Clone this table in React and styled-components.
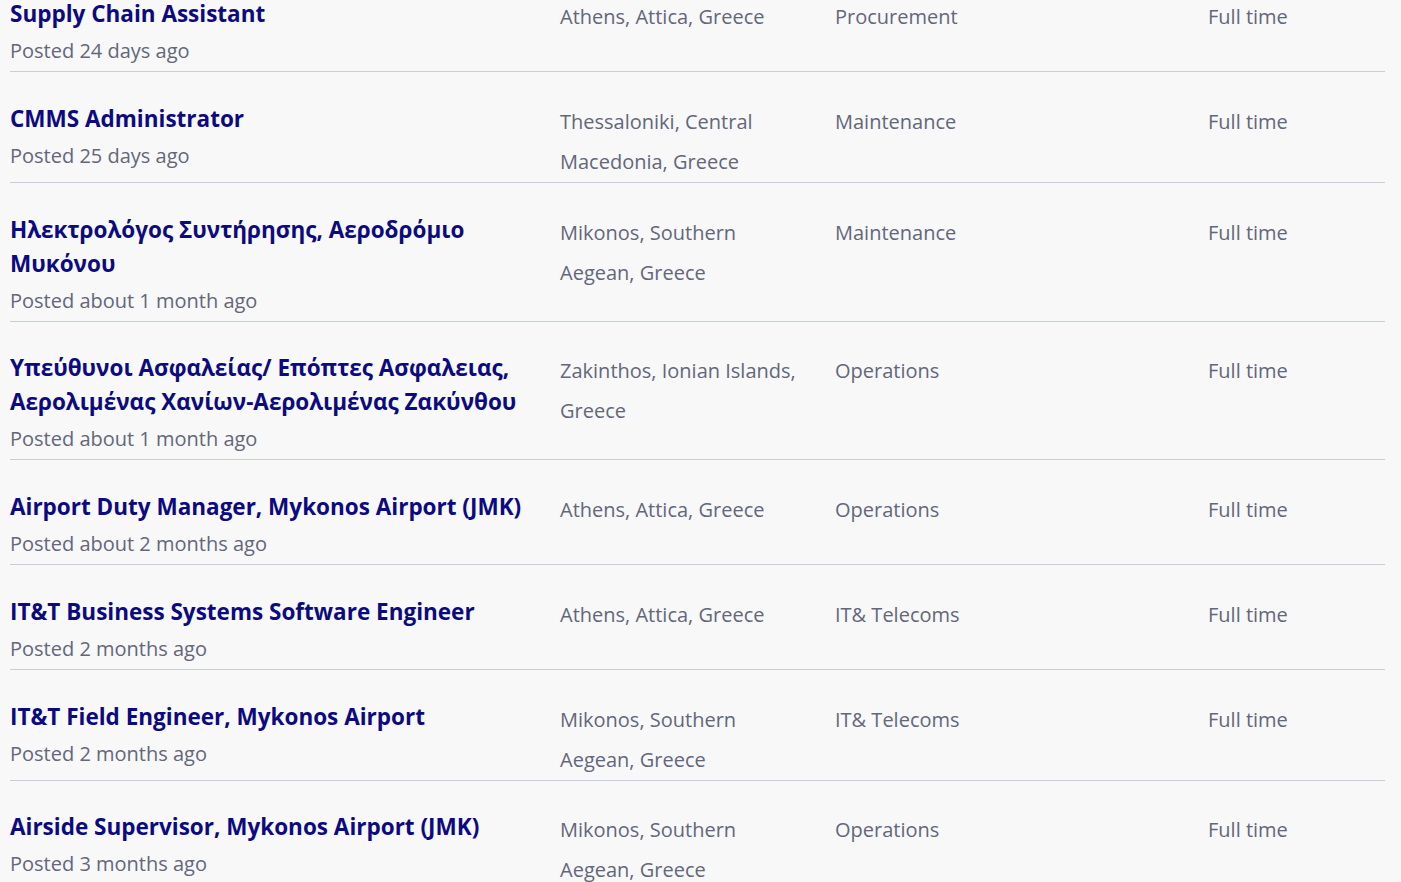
import React from 'react';
import styled, { createGlobalStyle } from 'styled-components';

const GlobalStyle = createGlobalStyle`
  html, body {
    margin: 0;
    padding: 0;
    background: #f8f8f9;
    font-family: "Open Sans", "Noto Sans", sans-serif;
    overflow: hidden;
  }
`;

const JobList = styled.div`
  margin: -32.75px 16px 0 10px;
  display: flex;
  flex-direction: column;
`;

const JobRow = styled.div`
  display: grid;
  grid-template-columns: 550px 275px 373px 1fr;
  padding-top: 29.75px;
  border-bottom: 1px solid #c9cdd6;
`;

const TitleCell = styled.div`
  padding-right: 20px;
`;

const JobTitle = styled.a`
  display: block;
  font-size: 22.5px;
  font-weight: 700;
  line-height: 34px;
  color: #0c0a80;
  text-decoration: none;
`;

const Posted = styled.div`
  font-size: 20px;
  line-height: 40px;
  color: #636779;
`;

const Cell = styled.div`
  font-size: 20px;
  line-height: 40px;
  color: #636779;
  padding-right: ${p => p.$pad || 0}px;
`;

const jobs = [
  ['Supply Chain Assistant', 'Posted 24 days ago', 'Athens, Attica, Greece', 'Procurement'],
  ['CMMS Administrator', 'Posted 25 days ago', 'Thessaloniki, Central Macedonia, Greece', 'Maintenance'],
  ['Ηλεκτρολόγος Συντήρησης, Αεροδρόμιο Μυκόνου', 'Posted about 1 month ago', 'Mikonos, Southern Aegean, Greece', 'Maintenance'],
  ['Υπεύθυνοι Ασφαλείας/ Επόπτες Ασφαλειας, Αερολιμένας Χανίων-Αερολιμένας Ζακύνθου', 'Posted about 1 month ago', 'Zakinthos, Ionian Islands, Greece', 'Operations'],
  ['Airport Duty Manager, Mykonos Airport (JMK)', 'Posted about 2 months ago', 'Athens, Attica, Greece', 'Operations'],
  ['IT&T Business Systems Software Engineer', 'Posted 2 months ago', 'Athens, Attica, Greece', 'IT& Telecoms'],
  ['IT&T Field Engineer, Mykonos Airport', 'Posted 2 months ago', 'Mikonos, Southern Aegean, Greece', 'IT& Telecoms'],
  ['Airside Supervisor, Mykonos Airport (JMK)', 'Posted 3 months ago', 'Mikonos, Southern Aegean, Greece', 'Operations'],
];

export default function App() {
  return (
    <>
      <GlobalStyle />
      <JobList>
        {jobs.map(([title, posted, location, dept]) => (
          <JobRow key={title}>
            <TitleCell>
              <JobTitle href="#">{title}</JobTitle>
              <Posted>{posted}</Posted>
            </TitleCell>
            <Cell $pad={25}>{location}</Cell>
            <Cell>{dept}</Cell>
            <Cell>Full time</Cell>
          </JobRow>
        ))}
      </JobList>
    </>
  );
}
